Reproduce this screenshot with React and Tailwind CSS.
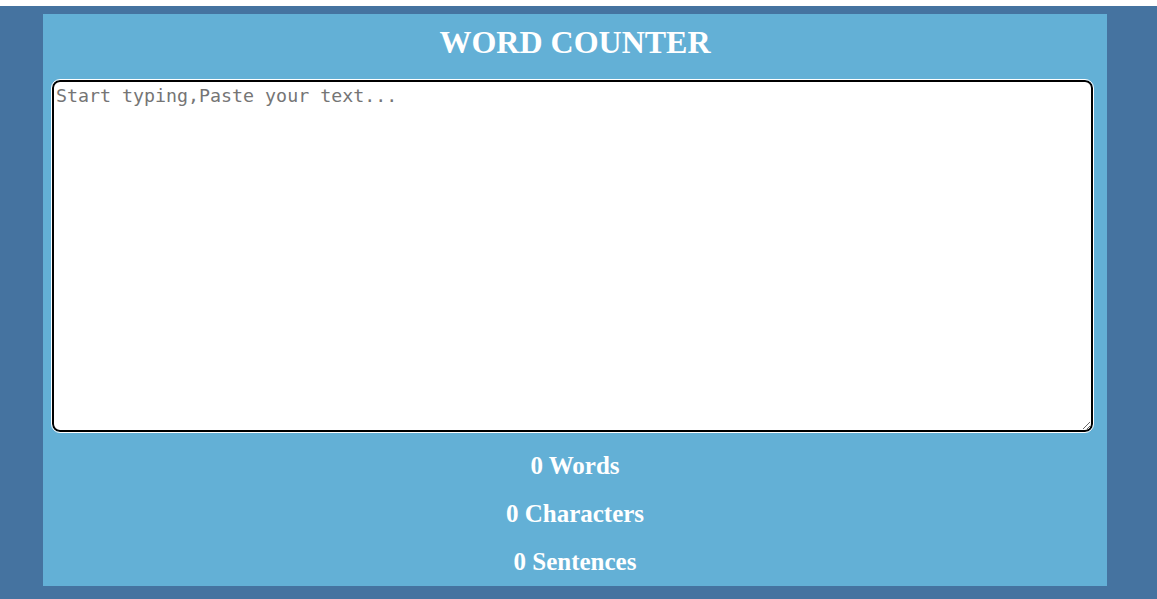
import React from "react";

export default function App() {
  return (
    <div className="w-[1157px] h-[599px] overflow-hidden bg-white pt-[6px]">
      <div className="bg-[#4573a0] h-[593px] pl-[43px] pr-[50px] pt-[8px]">
        <div className="bg-[#63b0d6] h-[572px] flex flex-col" style={{ fontFamily: '"Liberation Serif", "Times New Roman", serif' }}>
          <h1 className="h-[56px] leading-[56px] text-center text-white font-bold text-[32px] mb-[10px]">
            WORD COUNTER
          </h1>
          <textarea
            placeholder="Start typing,Paste your text..."
            className="ml-[9px] w-[1041px] h-[352px] bg-white border-2 border-black rounded-[8px] outline outline-1 outline-white px-[2px] py-[2px] text-[18.3px] leading-[24px] placeholder:text-[#757575] text-black resize-y"
            style={{ fontFamily: '"DejaVu Sans Mono", monospace' }}
          />
          <div className="mt-[10px] flex flex-col text-white font-bold text-[25px] text-center">
            <div className="h-[48px] leading-[48px]">0 Words</div>
            <div className="h-[48px] leading-[48px]">0 Characters</div>
            <div className="h-[48px] leading-[48px]">0 Sentences</div>
          </div>
        </div>
      </div>
    </div>
  );
}
